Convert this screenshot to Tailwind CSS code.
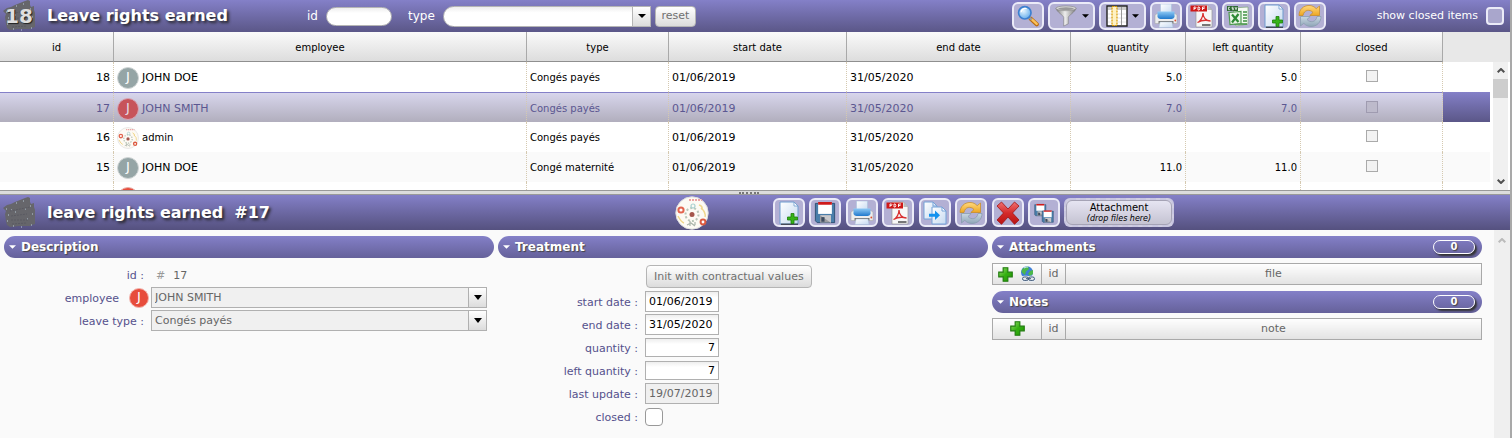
<!DOCTYPE html>
<html lang="en">
<head>
<meta charset="utf-8">
<title>Leave rights earned</title>
<script src="https://cdn.jsdelivr.net/npm/@tailwindcss/browser@4"></script>
</head>
<body class="flex min-h-screen flex-col border-r-2 border-[#a9a9a9] bg-[#fafafa] font-['Verdana','DejaVu_Sans',sans-serif] text-[11px] leading-4 text-black">

<svg class="absolute h-0 w-0" aria-hidden="true">
  <defs>
    <linearGradient id="gBlue" x1="0" y1="0" x2="0" y2="1"><stop offset="0" stop-color="#8fcaf5"/><stop offset="1" stop-color="#1f78cc"/></linearGradient>
    <linearGradient id="gPaper" x1="0" y1="0" x2="1" y2="1"><stop offset="0" stop-color="#ffffff"/><stop offset="1" stop-color="#c5d9f0"/></linearGradient>
    <linearGradient id="gMetal" x1="0" y1="0" x2="1" y2="0"><stop offset="0" stop-color="#777"/><stop offset=".45" stop-color="#eee"/><stop offset="1" stop-color="#777"/></linearGradient>
    <linearGradient id="gGold" x1="0" y1="0" x2="0" y2="1"><stop offset="0" stop-color="#ffd980"/><stop offset="1" stop-color="#eda622"/></linearGradient>
    <linearGradient id="gSteel" x1="0" y1="0" x2="0" y2="1"><stop offset="0" stop-color="#c9d7e2"/><stop offset="1" stop-color="#8fa6b8"/></linearGradient>
    <linearGradient id="gRed" x1="0" y1="0" x2="0" y2="1"><stop offset="0" stop-color="#f07070"/><stop offset=".5" stop-color="#d42a2a"/><stop offset="1" stop-color="#b81414"/></linearGradient>
    <linearGradient id="gGreen" x1="0" y1="0" x2="1" y2="1"><stop offset="0" stop-color="#9be070"/><stop offset=".5" stop-color="#35b012"/><stop offset="1" stop-color="#1c9400"/></linearGradient>
    <radialGradient id="gLens" cx=".4" cy=".35" r=".7"><stop offset="0" stop-color="#e4f5ff"/><stop offset="1" stop-color="#5ea9ea"/></radialGradient>
  </defs>
  <symbol id="i-search" viewBox="0 0 24 24"><path d="M15 15l6.500 6" stroke="#b96a10" stroke-width="4.600" stroke-linecap="round"/><path d="M16.500 16l5 4.600" stroke="#fbc25a" stroke-width="2.600" stroke-linecap="round"/><path d="M13.500 13.500l2.500 2.500" stroke="#999" stroke-width="2.500"/><circle cx="8.500" cy="8.500" r="6.800" fill="url(#gLens)" stroke="#3c7fd0" stroke-width="1.800"/><path d="M4.500 8a4.500 4.500 0 0 1 6-4" stroke="#fff" stroke-width="1.500" fill="none"/></symbol>
  <symbol id="i-filter" viewBox="0 0 24 24"><path d="M1 3.500C2 8 9 11 9.500 13.500V23l5-2.500v-7C15 11 22 8 23 3.500z" fill="url(#gMetal)" stroke="#777" stroke-width=".6"/><ellipse cx="12" cy="3.600" rx="11" ry="2.600" fill="#d7d7d7" stroke="#888" stroke-width=".7"/><ellipse cx="12" cy="4" rx="8.500" ry="1.500" fill="#9a9a9a"/></symbol>
  <symbol id="i-cols" viewBox="0 0 22 22"><path d="M1 1h20v20H1z" fill="#fff" stroke="#222" stroke-width="1.400"/><path d="M2 2h18v3H2z" fill="#ccc"/><path d="M2 9h18M2 13h18M2 17h18" stroke="#ddd" stroke-width=".8"/><path d="M15.500 2v18" stroke="#999"/><path d="M6 1.500h5v19H6z" fill="#fff2c4" stroke="#d79800" stroke-width="1.200" stroke-dasharray="2 1"/></symbol>
  <symbol id="i-print" viewBox="0 0 24 24"><path d="M6.500 0h11v11h-11z" fill="url(#gPaper)" stroke="#a9c3de" stroke-width=".6"/><path d="M1 11l3-2h16l3 2v8.500H1z" fill="#ededed" stroke="#aaa" stroke-width=".6"/><path d="M3.500 7.500h17v5.500q-1 2-3 2h-11q-2 0-3-2z" fill="url(#gBlue)"/><path d="M4.500 17h15v2.500h-15z" fill="#777"/><path d="M6 18h12l1 5.500H5z" fill="url(#gPaper)" stroke="#a5bdd6" stroke-width=".5"/><circle cx="21.300" cy="16.500" r=".9" fill="#e05030"/></symbol>
  <symbol id="i-pdf" viewBox="0 0 24 24"><path d="M6 1h11.500L22 6v17H6z" fill="#f7f7f7" stroke="#999" stroke-width=".7"/><path d="M17.500 1v5H22z" fill="#bbb"/><path d="M.5 1.500H17v6H.5z" fill="#cf1818"/><path d="M4 6V3h1.500q1 .8 0 1.500H4M8 3v3h1.200q1.300-1.500 0-3zM12.500 6V3h2.500M12.500 4.500h2" stroke="#fff" stroke-width=".9" fill="none"/><path d="M7.500 18.500c3-1 5.500-5.500 5.500-9.500 0 4.500 3 8 7.500 8-4.500-1.300-9-.8-13 1.500z" fill="none" stroke="#d93030" stroke-width="1.300"/><path d="M12 20h8.500v2H12z" fill="#777"/></symbol>
  <symbol id="i-csv" viewBox="0 0 24 24"><path d="M7 4l15-1v17l-12 2z" fill="#f4faf2" stroke="#7ea678" stroke-width=".7"/><path d="M17 8h4M17 11h4M17 14h4M17 17h4M8 20h13" stroke="#3f9142" stroke-width="1.500"/><path d="M1 2h11v5H1z" fill="#2f6b33"/><path d="M4 3.300H2.500v2.400H4M7.500 3.300H6v1.200h1.500v1.200H6M9 3l1 2.700L11 3" stroke="#fff" stroke-width=".7" fill="none"/><path d="M3 8.500l12-1v12l-11 1z" fill="#e9f5e7" stroke="#4f9a50" stroke-width="1.200"/><path d="M6 10.500l6.500 7.500M12.500 10L6 18.500" stroke="#2d8a35" stroke-width="2.200"/></symbol>
  <symbol id="i-new" viewBox="0 0 24 24"><path d="M3 1h14l4 4v18H3z" fill="url(#gPaper)" stroke="#6f9ccf" stroke-width="1"/><path d="M17 1v4h4z" fill="#fff" stroke="#6f9ccf" stroke-width=".8"/><path d="M4 23.200h17" stroke="#222" stroke-width="1"/><path d="M14 12.500h3V16h3.500v3H17v3.500h-3V19h-3.500v-3H14z" fill="#35b318" stroke="#1e7d08" stroke-width=".8"/></symbol>
  <symbol id="i-refresh" viewBox="0 0 24 24"><path d="M1 11.500C1 5.500 5.500 1.500 11 1.500c3.200 0 5.500 1.300 7.200 3.200L21.500 2v9.500h-9.700l3.200-3C12 5 6 5.500 5 11.500z" fill="url(#gGold)" stroke="#c98a1c" stroke-width=".7"/><path d="M23 12.500c0 6-4.500 10-10 10-3.200 0-5.500-1.300-7.200-3.200L2.500 22v-9.500h9.700l-3.200 3c3 3.500 9 3 10-3z" fill="url(#gSteel)" stroke="#8499aa" stroke-width=".7"/></symbol>
  <symbol id="i-save" viewBox="0 0 24 24"><path d="M1.500 1.500h21v21H3.500l-2-2z" fill="#4a7eaa" stroke="#2c4d70" stroke-width="1"/><path d="M4.500 1h15v12h-15z" fill="#fff"/><path d="M4.500 0h15v3h-15z" fill="#cf1b1b"/><path d="M6.500 14.500h12v8h-12z" fill="#9b9b9f"/><path d="M6.500 14.500h12v8z" fill="#c9c9cc"/><path d="M8 16.500h3.500v5H8z" fill="#3d4c60"/></symbol>
  <symbol id="i-copy" viewBox="0 0 24 24"><path d="M1 1h9l4 4v13H1z" fill="url(#gPaper)" stroke="#74a2d8"/><path d="M10 1v4h4" fill="none" stroke="#74a2d8"/><path d="M9 6h10l4 4v13H9z" fill="url(#gPaper)" stroke="#74a2d8"/><path d="M19 6v4h4z" fill="#fff" stroke="#74a2d8"/><path d="M6 12.800h6V9.500l5 4.700-5 4.700v-3.200H6z" fill="#1492ee"/></symbol>
  <symbol id="i-delete" viewBox="0 0 24 24"><path d="M5.500 1L12 8l6.500-7L23 5l-6.500 7 6.500 7-4.500 4.300L12 16l-6.500 7.300L1 19l6.500-7L1 5z" fill="url(#gRed)" stroke="#a01212" stroke-width=".8" stroke-linejoin="round"/></symbol>
  <symbol id="i-plus" viewBox="0 0 16 16"><path d="M5.500.8h5v4.700h4.700v5h-4.700v4.700h-5v-4.700H.8v-5h4.700z" fill="url(#gGreen)" stroke="#1e7a0c" stroke-width="1.200"/></symbol>
  <symbol id="i-link" viewBox="0 0 16 16"><circle cx="7" cy="6.300" r="6" fill="#3d7fd8"/><path d="M2 3.500Q5 0 8 .6L9 3 6 5.500 5 9 1.500 6zM10 5l3-1v4l-3 2-2-2z" fill="#4cb84a"/><path d="M4 2q2-1.500 4-1" stroke="#d8efff" fill="none"/><g fill="none" stroke="#e7edf4" stroke-width="2.600"><rect x="2.500" y="11" width="6" height="3.400" rx="1.700"/><rect x="8.500" y="11" width="6" height="3.400" rx="1.700"/></g><g fill="none" stroke="#3f5878" stroke-width="1"><rect x="2.500" y="11" width="6" height="3.400" rx="1.700"/><rect x="8.500" y="11" width="6" height="3.400" rx="1.700"/><path d="M6 12.700h5"/></g></symbol>
  <symbol id="i-doodle" viewBox="0 0 34 34"><circle cx="17" cy="17" r="16.200" fill="#fdfaf4" stroke="#ddd" stroke-width="1"/><path d="M14 4h13" stroke="#eba5a5" stroke-width="1.800" stroke-dasharray="2 1"/><circle cx="6" cy="14" r="2.600" fill="#fff" stroke="#e2644e" stroke-width="2"/><circle cx="28" cy="26" r="2.400" fill="#fff" stroke="#dc5a40" stroke-width="2"/><circle cx="17" cy="18.500" r="6.500" fill="none" stroke="#b9c6b9" stroke-width="2" stroke-dasharray="2 2"/><circle cx="17" cy="18.500" r="2.500" fill="#a5564c"/><circle cx="18" cy="10" r="2" fill="none" stroke="#a9d0d0" stroke-width="1.200"/><path d="M26 12q5 4 4 9M3 20q3 6 6 7M24 9q4 1 3 5" stroke="#f0d78c" stroke-width="1.500" fill="none"/><path d="M12 29l4-2 4 3M15 25v5M20 26v3" stroke="#aab4aa" stroke-width="1.200" fill="none"/></symbol>
  <symbol id="i-clap" viewBox="0 0 32 32"><path d="M0 11l4-3 4-1 4-2 5-2 5-2 3-1 2 1v4l1 2 3-1v4l1 3v14l-3 1-2 1H16l-9 1-3-2-1-4-1-7 1-3-2-2z" fill="#66666b"/><path d="M3 12h1M8 13h1M13 6h1M20 4h1M27 9h1M5 18h1M12 15h1M22 12h1M29 17h1M4 24h1M10 29h1M18 30h1M28 28h1M24 22h1" stroke="#b8cbd8" stroke-width="1"/><path d="M8 19l16-2M8 23h17M9 27l15-1M7 14l20-4" stroke="#5a5a62" stroke-width="1" stroke-dasharray="2 1"/></symbol>
</svg>

<!-- list toolbar -->
<header class="flex h-8 shrink-0 items-center bg-linear-to-b from-[#8480c8] to-[#5b5788] text-white">
  <div class="flex w-[307px] items-center">
    <div class="relative ml-[3px] h-8 w-8">
      <svg class="h-8 w-8"><use href="#i-clap"/></svg>
      <span class="absolute inset-0 flex items-center justify-center text-xl font-bold text-[#dedede] [text-shadow:1px_1px_1px_#222]">18</span>
    </div>
    <h1 class="ml-3 whitespace-nowrap text-base font-bold [text-shadow:2px_2px_3px_#222]">Leave rights earned</h1>
  </div>
  <label for="fid" class="w-[19px] text-xs">id</label>
  <input id="fid" class="h-[19px] w-[66px] rounded-full border border-[#b5b5b5] bg-linear-to-b from-[#eee] to-white to-30% px-2 text-black">
  <label for="ftype" class="ml-4 w-[35px] text-xs">type</label>
  <div class="relative h-[21px] w-[208px]">
    <select id="ftype" class="h-full w-full appearance-none rounded-l-full border border-[#b5b5b5] bg-linear-to-b from-[#eee] to-white to-30% pl-3 text-black"><option></option></select>
    <span class="pointer-events-none absolute inset-y-0 right-0 flex w-[19px] items-center justify-center border border-[#b5b5b5] bg-linear-to-b from-white to-[#dcdcdc]"><svg class="h-1 w-2" viewBox="0 0 8 4"><path d="M0 0h8L4 4z"/></svg></span>
  </div>
  <button class="ml-1 h-[21px] w-[41px] rounded border border-[#b5b5b5] bg-linear-to-b from-white to-[#dcdcdc] text-[11px] text-[#707070]">reset</button>
  <div class="ml-auto flex gap-1">
    <button aria-label="search" class="flex h-7 w-8 items-center justify-center rounded-md border-2 border-[#ebebf8] bg-[#b3b0d4]"><svg class="h-[22px] w-[22px]"><use href="#i-search"/></svg></button>
    <button aria-label="filter" class="flex h-7 w-[47px] items-center justify-center gap-1 rounded-md border-2 border-[#ebebf8] bg-[#b3b0d4]"><svg class="h-[22px] w-6"><use href="#i-filter"/></svg><svg class="h-1 w-[7px]" viewBox="0 0 8 4"><path d="M0 0h8L4 4z"/></svg></button>
    <button aria-label="columns" class="flex h-7 w-[47px] items-center justify-center gap-1 rounded-md border-2 border-[#ebebf8] bg-[#b3b0d4]"><svg class="h-[22px] w-[22px]"><use href="#i-cols"/></svg><svg class="h-1 w-[7px]" viewBox="0 0 8 4"><path d="M0 0h8L4 4z"/></svg></button>
    <button aria-label="print" class="flex h-7 w-8 items-center justify-center rounded-md border-2 border-[#ebebf8] bg-[#b3b0d4]"><svg class="h-6 w-6"><use href="#i-print"/></svg></button>
    <button aria-label="pdf" class="flex h-7 w-8 items-center justify-center rounded-md border-2 border-[#ebebf8] bg-[#b3b0d4]"><svg class="h-6 w-6"><use href="#i-pdf"/></svg></button>
    <button aria-label="csv" class="flex h-7 w-8 items-center justify-center rounded-md border-2 border-[#ebebf8] bg-[#b3b0d4]"><svg class="h-6 w-6"><use href="#i-csv"/></svg></button>
    <button aria-label="new" class="flex h-7 w-8 items-center justify-center rounded-md border-2 border-[#ebebf8] bg-[#b3b0d4]"><svg class="h-6 w-6"><use href="#i-new"/></svg></button>
    <button aria-label="refresh" class="flex h-7 w-8 items-center justify-center rounded-md border-2 border-[#ebebf8] bg-[#b3b0d4]"><svg class="h-6 w-6"><use href="#i-refresh"/></svg></button>
  </div>
  <div class="flex w-[184px] items-center justify-end gap-2 pr-[6px]">
    <label for="showclosed">show closed items</label>
    <input id="showclosed" type="checkbox" class="h-[18px] w-[18px] appearance-none rounded border-2 border-[#ebebf8] bg-[#a9a6cc]">
  </div>
</header>

<!-- list -->
<section class="flex h-[158px] shrink-0 overflow-hidden bg-white">
  <table class="h-[180px] flex-1 table-fixed border-separate border-spacing-0 text-[11px]">
    <colgroup><col class="w-[114px]"><col><col class="w-[142px]"><col class="w-[178px]"><col class="w-[224px]"><col class="w-[115px]"><col class="w-[115px]"><col class="w-[142px]"><col class="w-[47px]"></colgroup>
    <thead>
      <tr class="h-[30px] bg-linear-to-b from-[#fafafa] to-[#dcdcdc] *:border-r *:border-b *:border-r-[#a9a9a9] *:border-b-[#8f8f8f] *:p-0 *:pt-[2px] *:text-[10px] *:font-normal">
        <th>id</th><th>employee</th><th>type</th><th>start date</th><th>end date</th><th>quantity</th><th>left quantity</th><th>closed</th><td class="border-none! bg-[#e8e8e8]"></td>
      </tr>
    </thead>
    <tbody class="[&_td]:border-r [&_td]:border-dotted [&_td]:border-[#d5c9b0] [&_td]:px-[3px] [&_td]:pt-[2px] [&_td]:pb-0 [&_td:last-child]:border-none [&_td:nth-child(3)]:text-[10px] [&_td:nth-child(6)]:text-[10px] [&_td:nth-child(7)]:text-[10px]">
      <tr class="h-[30px]"><td class="text-right">18</td><td><div class="flex items-center gap-[3px]"><span class="flex h-[22px] w-[22px] items-center justify-center rounded-full border border-[#d0d5d5] bg-[#95a5a6] pb-[2px] text-[13px] text-white">J</span>JOHN DOE</div></td><td>Congés payés</td><td>01/06/2019</td><td>31/05/2020</td><td class="text-right">5.0</td><td class="text-right">5.0</td><td><input type="checkbox" aria-label="closed 18" class="mx-auto mb-1 block h-3 w-3 appearance-none border border-[#aaa] bg-[#f2f2f2]"></td><td></td></tr>
      <tr class="h-[30px] bg-linear-to-b from-[#d9d7ee] to-[#b1aebd] text-[#5b5791] [&>td]:border-t [&>td]:border-t-[#8480c8] [&>td]:[border-top-style:solid]"><td class="text-right">17</td><td><div class="flex items-center gap-[3px]"><span class="flex h-[22px] w-[22px] items-center justify-center rounded-full border border-[#d6a5b5] bg-[#c7545a] pb-[2px] text-[13px] text-[#e5dde8]">J</span>JOHN SMITH</div></td><td>Congés payés</td><td>01/06/2019</td><td>31/05/2020</td><td class="text-right">7.0</td><td class="text-right">7.0</td><td><input type="checkbox" aria-label="closed 17" class="mx-auto mb-1 block h-3 w-3 appearance-none border border-[#9f9bb0] bg-[#bdbacb]"></td><td class="border-none! bg-linear-to-b from-[#8480c8] to-[#5b5788]"></td></tr>
      <tr class="h-[30px]"><td class="text-right">16</td><td><div class="flex items-center gap-[3px] text-[10px]"><svg class="h-[22px] w-[22px]"><use href="#i-doodle"/></svg>admin</div></td><td>Congés payés</td><td>01/06/2019</td><td>31/05/2020</td><td></td><td></td><td><input type="checkbox" aria-label="closed 16" class="mx-auto mb-1 block h-3 w-3 appearance-none border border-[#aaa] bg-[#f2f2f2]"></td><td></td></tr>
      <tr class="h-[30px] bg-[#fafafa]"><td class="text-right">15</td><td><div class="flex items-center gap-[3px]"><span class="flex h-[22px] w-[22px] items-center justify-center rounded-full border border-[#d0d5d5] bg-[#95a5a6] pb-[2px] text-[13px] text-white">J</span>JOHN DOE</div></td><td>Congé maternité</td><td>01/06/2019</td><td>31/05/2020</td><td class="text-right">11.0</td><td class="text-right">11.0</td><td><input type="checkbox" aria-label="closed 15" class="mx-auto mb-1 block h-3 w-3 appearance-none border border-[#aaa] bg-[#f2f2f2]"></td><td></td></tr>
      <tr class="h-[30px]"><td></td><td><div class="h-[22px] w-[22px] rounded-full border border-[#e8b0a8] bg-[#e74c3c]"></div></td><td></td><td></td><td></td><td></td><td></td><td></td><td></td></tr>
    </tbody>
  </table>
  <div class="flex w-5 flex-col">
    <div class="h-[30px] bg-[#e8e8e8]"></div>
    <div class="mr-[2px] ml-[3px] flex flex-1 flex-col items-center bg-[#f0f0f0]">
      <svg class="my-[6px] h-[5px] w-2" viewBox="0 0 8 5" fill="none" stroke="#505050" stroke-width="2"><path d="M.7 4.300L4 1l3.300 3.300"/></svg>
      <div class="h-[19px] w-full bg-[#cdcdcd]"></div>
      <svg class="mt-auto mb-[6px] h-[5px] w-2" viewBox="0 0 8 5" fill="none" stroke="#505050" stroke-width="2"><path d="M.7.7L4 4 7.300.7"/></svg>
    </div>
  </div>
</section>

<!-- splitter -->
<div class="flex h-[5px] shrink-0 items-center justify-center border-y border-[#999] bg-[#dcdcdc] pr-3"><div class="h-[2px] w-5 border-t-2 border-dotted border-[#777]"></div></div>

<!-- detail toolbar -->
<header class="flex h-[35px] shrink-0 items-center bg-linear-to-b from-[#8480c8] to-[#55517f] text-white">
  <div class="flex w-[675px] items-center">
    <svg class="ml-[3px] h-8 w-8"><use href="#i-clap"/></svg>
    <h2 class="ml-3 whitespace-pre text-base font-bold [text-shadow:2px_2px_3px_#222]">leave rights earned  #17</h2>
  </div>
  <svg class="h-[34px] w-[34px]"><use href="#i-doodle"/></svg>
  <div class="ml-16 flex w-[287px] justify-between">
    <button aria-label="new item" class="flex h-[29px] w-8 items-center justify-center rounded-md border-2 border-[#ebebf8] bg-[#b3b0d4]"><svg class="h-6 w-6"><use href="#i-new"/></svg></button>
    <button aria-label="save" class="flex h-[29px] w-8 items-center justify-center rounded-md border-2 border-[#ebebf8] bg-[#b3b0d4]"><svg class="h-[22px] w-[22px]"><use href="#i-save"/></svg></button>
    <button aria-label="print item" class="flex h-[29px] w-8 items-center justify-center rounded-md border-2 border-[#ebebf8] bg-[#b3b0d4]"><svg class="h-6 w-6"><use href="#i-print"/></svg></button>
    <button aria-label="pdf item" class="flex h-[29px] w-8 items-center justify-center rounded-md border-2 border-[#ebebf8] bg-[#b3b0d4]"><svg class="h-6 w-6"><use href="#i-pdf"/></svg></button>
    <button aria-label="copy" class="flex h-[29px] w-8 items-center justify-center rounded-md border-2 border-[#ebebf8] bg-[#b3b0d4]"><svg class="h-6 w-6"><use href="#i-copy"/></svg></button>
    <button aria-label="refresh item" class="flex h-[29px] w-8 items-center justify-center rounded-md border-2 border-[#ebebf8] bg-[#b3b0d4]"><svg class="h-6 w-6"><use href="#i-refresh"/></svg></button>
    <button aria-label="delete" class="flex h-[29px] w-8 items-center justify-center rounded-md border-2 border-[#ebebf8] bg-[#b3b0d4]"><svg class="h-6 w-6"><use href="#i-delete"/></svg></button>
    <button aria-label="save all" class="flex h-[29px] w-8 items-center justify-center rounded-md border-2 border-[#ebebf8] bg-[#b3b0d4]"><svg class="h-[22px] w-[22px]" viewBox="0 0 24 24"><use href="#i-save" x="1" y="2" width="14" height="14"/><use href="#i-save" x="9" y="9" width="14" height="14"/></svg></button>
  </div>
  <button class="ml-1 h-[29px] w-[110px] rounded-md border-2 border-dashed border-[#c8c6e0] bg-[#d0cee2] text-black"><span class="flex h-[25px] flex-col items-center justify-center rounded-md border border-[#a5a3b5] bg-linear-to-b from-[#e6e5f2] to-[#c5c3d2]"><span class="text-[10px] leading-3">Attachment</span><span class="text-[8px] leading-[9px] italic">(drop files here)</span></span></button>
</header>

<!-- detail form -->
<main class="flex flex-1 text-xs text-[#55518c]">
  <div class="grid flex-1 grid-cols-3 items-start gap-1 py-[6px] pr-3 pl-1">
    <section>
      <h3 class="flex h-[22px] items-center gap-[5px] rounded-full bg-linear-to-b from-[#8480c8] to-[#65619a] pl-[5px] font-bold text-white [text-shadow:1px_1px_1px_#444]"><svg class="h-1 w-[7px]" viewBox="0 0 8 4" fill="#fff"><path d="M0 0h8L4 4z"/></svg>Description</h3>
      <div class="mt-[5px] flex h-[23px] items-center pt-1 text-[11px]"><span class="w-[140px] text-right">id :</span><span class="ml-3 text-[#999]">#</span><span class="ml-2 text-[#666]">17</span></div>
      <div class="flex h-[23px] items-center">
        <label for="emp" class="w-[115px] pt-1 text-right text-[11px]">employee</label>
        <span class="ml-[10px] flex h-5 w-5 items-center justify-center rounded-full border border-[#f2b5ae] bg-[#e74c3c] pb-[2px] text-[13px] text-white">J</span>
        <div class="relative ml-[2px] h-[21px] w-[336px]"><select id="emp" class="h-full w-full appearance-none border border-[#b0b0b0] bg-[#f0f0f0] pt-[2px] pl-[3px] text-[11px] text-[#666]"><option>JOHN SMITH</option></select><span class="pointer-events-none absolute inset-y-0 right-0 flex w-[19px] items-center justify-center border border-[#b0b0b0] bg-linear-to-b from-white to-[#dcdcdc]"><svg class="h-[5px] w-2" viewBox="0 0 8 5"><path d="M0 0h8L4 5z"/></svg></span></div>
      </div>
      <div class="flex h-[23px] items-center">
        <label for="ltype" class="w-[140px] pt-1 text-right text-[11px]">leave type :</label>
        <div class="relative ml-[7px] h-[21px] w-[336px]"><select id="ltype" class="h-full w-full appearance-none border border-[#b0b0b0] bg-[#f0f0f0] pt-[2px] pl-[3px] text-[11px] text-[#666]"><option>Congés payés</option></select><span class="pointer-events-none absolute inset-y-0 right-0 flex w-[19px] items-center justify-center border border-[#b0b0b0] bg-linear-to-b from-white to-[#dcdcdc]"><svg class="h-[5px] w-2" viewBox="0 0 8 5"><path d="M0 0h8L4 5z"/></svg></span></div>
      </div>
    </section>

    <section>
      <h3 class="flex h-[22px] items-center gap-[5px] rounded-full bg-linear-to-b from-[#8480c8] to-[#65619a] pl-[5px] font-bold text-white [text-shadow:1px_1px_1px_#444]"><svg class="h-1 w-[7px]" viewBox="0 0 8 4" fill="#fff"><path d="M0 0h8L4 4z"/></svg>Treatment</h3>
      <button class="mt-[7px] mb-[2px] ml-[148px] block h-[23px] rounded border border-[#b5b5b5] bg-linear-to-b from-white to-[#dcdcdc] px-[7px] pt-[2px] text-[11px] text-[#707070]">Init with contractual values</button>
      <div class="grid grid-cols-[140px_auto] items-center justify-start gap-x-[7px] auto-rows-[23px] text-[11px]">
        <label for="sd" class="pt-1 text-right">start date :</label><input id="sd" value="01/06/2019" class="h-[21px] w-[74px] border border-[#b0b0b0] bg-linear-to-b from-[#eee] to-white to-30% px-[3px] text-[11px] text-black">
        <label for="ed" class="pt-1 text-right">end date :</label><input id="ed" value="31/05/2020" class="h-[21px] w-[74px] border border-[#b0b0b0] bg-linear-to-b from-[#eee] to-white to-30% px-[3px] text-[11px] text-black">
        <label for="q" class="pt-1 text-right">quantity :</label><input id="q" value="7" class="h-[19px] w-[74px] border border-[#b0b0b0] bg-linear-to-b from-[#eee] to-white to-30% px-[3px] text-right text-[11px] text-black">
        <label for="lq" class="pt-1 text-right">left quantity :</label><input id="lq" value="7" class="h-[19px] w-[74px] border border-[#b0b0b0] bg-linear-to-b from-[#eee] to-white to-30% px-[3px] text-right text-[11px] text-black">
        <label for="lu" class="pt-1 text-right">last update :</label><input id="lu" value="19/07/2019" readonly class="h-[21px] w-[74px] border border-[#b0b0b0] bg-[#f0f0f0] px-[3px] text-[11px] text-[#666]">
        <label for="cl" class="pt-1 text-right">closed :</label><input id="cl" type="checkbox" class="h-[18px] w-[18px] appearance-none rounded border border-[#999] bg-white">
      </div>
    </section>

    <section>
      <h3 class="flex h-[22px] items-center gap-[5px] rounded-full bg-linear-to-b from-[#8480c8] to-[#65619a] pr-[7px] pl-[5px] font-bold text-white [text-shadow:1px_1px_1px_#444]"><svg class="h-1 w-[7px]" viewBox="0 0 8 4" fill="#fff"><path d="M0 0h8L4 4z"/></svg>Attachments<span class="ml-auto flex h-[14px] w-[42px] items-center justify-center rounded-full border border-white text-[10px] shadow-[2px_2px_2px_#333]">0</span></h3>
      <table class="mt-[5px] h-[22px] w-full table-fixed border-collapse bg-linear-to-b from-white to-[#e2e2e2] text-center text-[#666] [&_th]:border [&_th]:border-[#a9a9a9] [&_th]:p-0 [&_th]:text-[11px] [&_th]:font-normal">
        <tr><th class="w-[49px]"><div class="flex items-center justify-center gap-[7px]"><button aria-label="add attachment"><svg class="block h-[15px] w-[15px]"><use href="#i-plus"/></svg></button><button aria-label="add link"><svg class="block h-4 w-4"><use href="#i-link"/></svg></button></div></th><th class="w-6">id</th><th>file</th></tr>
      </table>
      <h3 class="mt-[6px] flex h-[22px] items-center gap-[5px] rounded-full bg-linear-to-b from-[#8480c8] to-[#65619a] pr-[7px] pl-[5px] font-bold text-white [text-shadow:1px_1px_1px_#444]"><svg class="h-1 w-[7px]" viewBox="0 0 8 4" fill="#fff"><path d="M0 0h8L4 4z"/></svg>Notes<span class="ml-auto flex h-[14px] w-[42px] items-center justify-center rounded-full border border-white text-[10px] shadow-[2px_2px_2px_#333]">0</span></h3>
      <table class="mt-[5px] h-[22px] w-full table-fixed border-collapse bg-linear-to-b from-white to-[#e2e2e2] text-center text-[#666] [&_th]:border [&_th]:border-[#a9a9a9] [&_th]:p-0 [&_th]:text-[11px] [&_th]:font-normal">
        <tr><th class="w-[49px]"><button aria-label="add note" class="align-middle"><svg class="block h-[15px] w-[15px]"><use href="#i-plus"/></svg></button></th><th class="w-6">id</th><th>note</th></tr>
      </table>
    </section>
  </div>
  <div class="flex w-4 flex-col items-center bg-[#efefef] pt-2"><svg class="h-[5px] w-2" viewBox="0 0 8 5" fill="none" stroke="#bbb" stroke-width="2"><path d="M.7 4.300L4 1l3.300 3.300"/></svg></div>
</main>
</body>
</html>
